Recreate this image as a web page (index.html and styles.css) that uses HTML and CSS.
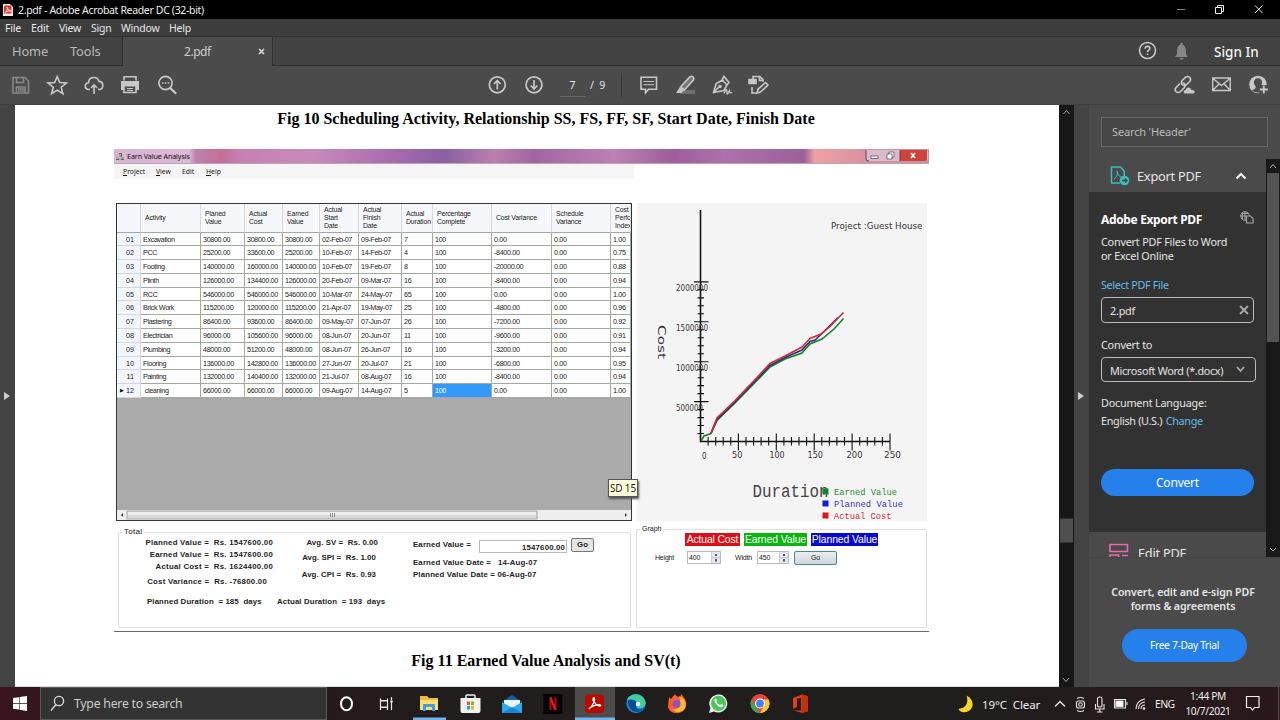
FILE: index.html
```html
<!DOCTYPE html>
<html lang="en">
<head>
<meta charset="utf-8">
<title>2.pdf - Adobe Acrobat Reader DC (32-bit)</title>
<link rel="stylesheet" href="styles.css">
</head>
<body>
<header class="titlebar">
  <svg class="app-icon" width="10" height="12" viewBox="0 0 10 12"><path d="M0 0h7l3 3v9H0z" fill="#f3e9e8"/><path d="M1 1.500h7.500v8H1z" fill="#d93a35"/><path d="M2.500 8.500c2-2 2-4 1.600-5.500 1 3 2 4 4 4-2-.3-4 0-5.600 1.500z" fill="none" stroke="#fff" stroke-width=".8"/></svg>
  <span class="title-text">2.pdf - Adobe Acrobat Reader DC (32-bit)</span>
  <svg class="win-controls" width="110" height="19" viewBox="1170 0 110 19" fill="none" stroke="#eee"><path d="M1177 9.500h8" stroke="#888"/><path d="M1215.500 7.500h6v6h-6zM1217.500 7v-1.500h6v6h-2"/><path d="M1255 5.500l7.500 7.500M1262.500 5.500l-7.500 7.500"/></svg>
</header>
<nav class="menubar"><span class="m1">File</span><span class="m2">Edit</span><span class="m3">View</span><span class="m4">Sign</span><span class="m5">Window</span><span class="m6">Help</span></nav>
<div class="tabs">
  <div class="tab-links"><span class="home">Home</span><span>Tools</span></div>
  <div class="tab-active"><span>2.pdf</span><svg width="7" height="7" viewBox="0 0 7 7" stroke="#ddd" stroke-width="1.500"><path d="M1 1l5 5M6 1l-5 5"/></svg></div>
  <div class="tab-right">
    <svg width="54" height="28" viewBox="1136 37 54 28"><circle cx="1147.500" cy="50.500" r="8" fill="none" stroke="#ccc" stroke-width="1.500"/><path d="M1145.200 48.800c0-3.400 5-3.200 4.600-.2-.2 1.500-2.300 1.500-2.300 3.400M1147.500 53.500v1.600" fill="none" stroke="#ccc" stroke-width="1.500"/><path d="M1175 57c1.800-1.500 2-3 2.200-7 .1-3 1.300-4.700 3.300-5.200V43h2v1.800c2 .5 3.200 2.200 3.300 5.200.2 4 .4 5.500 2.200 7zM1179.500 58h4c-.5 2-3.500 2-4 0z" fill="#888"/></svg>
    <span class="signin">Sign In</span>
  </div>
</div>
<div class="toolbar">
  <svg width="190" height="38" viewBox="0 66 190 38" fill="none" stroke="#c8c8c8" stroke-width="1.600">
    <path d="M13 77.500h12l3.500 3.500v12H13zM16.500 77.500v5h7v-5M16.500 93v-6h8.500v6" stroke="#888"/><path d="M18 88h6v4h-6z" fill="#777" stroke="none"/>
    <path d="M57.200 76.500l2.500 6.100 6.700.4-5.200 4.200 1.700 6.500-5.700-3.600-5.600 3.600 1.700-6.500-5.300-4.200 6.700-.4z"/>
    <path d="M90 89.500h-1.500c-4.500-.5-4.200-6.500 0-6.800.2-6.500 9.200-7 10.400-1.300 5.200 0 5 7.600.6 8.100H98M94 94v-9M91 88l3-3.200 3 3.200"/>
    <path d="M124 80.500v-3.700h12v3.700M124 92.500v-6.700h12v6.700z"/><path d="M121 81h18v9h-3v-4h-12v4h-3z" fill="#c8c8c8" stroke="none"/><path d="M127 88.500h6M127 90.500h6" stroke-width="1"/>
    <circle cx="165.500" cy="83" r="6.600"/><path d="M170.200 88l6 5.800" stroke-width="2.200"/><path d="M162 83h1.500M164.800 83h1.500M167.600 83h1.500"/>
  </svg>
  <svg class="pager-icons" width="60" height="38" viewBox="486 66 60 38" fill="none" stroke="#c8c8c8" stroke-width="1.700"><circle cx="497.300" cy="84.800" r="8"/><path d="M497.300 89.500v-8.800M494 84l3.300-3.500 3.300 3.500"/><circle cx="534" cy="84.800" r="8"/><path d="M534 80v8.800M530.700 85.500l3.300 3.500 3.300-3.500"/></svg>
  <span class="page-no">7</span><span class="page-of">/&nbsp; 9</span>
  <svg class="tools-icons" width="160" height="38" viewBox="612 66 160 38" fill="none" stroke="#c8c8c8" stroke-width="1.600">
    <path d="M621.500 73v24" stroke="#393939" stroke-width="1"/>
    <path d="M641 77.300h15.500v12h-8l-3 3.500v-3.500H641z"/><path d="M643.500 81.500h10.500M643.500 84.700h10.500" stroke-width="1"/>
    <path d="M683 90h12v4h-15z" fill="#707070" stroke="none"/><path d="M680.500 87l9.500-10.300c2-1.300 4.600.8 3.600 3.200l-9.200 10.100z" fill="#777"/><path d="M676 93l4-6 4 3.500-2.500 2.500z" fill="#c8c8c8" stroke="none"/>
    <path d="M713.500 92.500l2.800-9 6.200-3.500 4.500 5-3 5.500zM722 80l2-3.500 5 6-2 2.500M713.500 92.500l6-6"/><circle cx="720" cy="86.500" r="1" /><path d="M724 93.500c2-5 3-5 3-1s2-1 2.500-2c.5 3 1 2.500 2.500 2" stroke-width="1.300"/>
    <path d="M753 79v-2.500h6.800l3.200 3.200v2M752 87v6h4M759.500 76.500v4h3.500"/><path d="M749 79.500h7v4h-7z" fill="#c8c8c8"/><path d="M757 93l1-3.700 7.500-6.800 2.500 2.500-7.500 7z"/>
  </svg>
  <svg class="share-icons" width="110" height="38" viewBox="1170 66 110 38" fill="none" stroke="#c8c8c8" stroke-width="1.600">
    <path d="M1180 83.500l-4 4c-2.500 3.500 1.500 6.500 4.500 4l4-4c1.700-2.200.2-4.600-2-4.700M1183 85c-2.500-1-2-3.500-.5-4.800l3-3c3.500-2 6.500 1.300 4.200 4.300l-3 3c-1 .9-2.500 1.200-3.700.5"/><path d="M1185 93.500c-2-.3-1.500-3.700.8-3.500.8-3.500 5-3 5.600 0 3.500-.4 4.500 3 1.500 3.500z" fill="#c8c8c8" stroke="none"/>
    <path d="M1212.700 78h17.500v12.500h-17.500zM1213 78.500l8.500 7 8.500-7M1213 90l6-6M1230 90l-6-6" stroke-width="1.400"/>
    <circle cx="1258" cy="84.500" r="8.800" fill="#c8c8c8" stroke="none"/><path d="M1258 78.300c5 0 4.800 5.500 2.400 8.200v1.800l3.600 2.200c-3.500 2.600-8.500 2.600-12 0l3.600-2.200v-1.800c-2.400-2.700-2.600-8.200 2.400-8.200z" fill="#4b4b4b" stroke="none"/><path d="M1259.500 85h8v8h-8z" fill="#4b4b4b" stroke="none"/><path d="M1263.800 85.500v8M1259.800 89.500h8" stroke-width="1.800"/>
  </svg>
</div>
<main>
  <div class="left-strip"><i class="tri"></i></div>
  <article class="page">
    <h2 class="cap cap10">Fig 10 Scheduling Activity, Relationship SS, FS, FF, SF, Start Date, Finish Date</h2>
    <section class="shot">
      <div class="shot-title"><svg width="10" height="9" viewBox="0 0 10 9"><path d="M1 5h8v3H1zM4 1h3v4H4z" fill="#666"/><path d="M5 2v6M1 6h8" stroke="#ddd"/></svg><span>Earn Value Analysis</span>
        <svg class="shot-ctl" width="64" height="13" viewBox="0 0 64 13"><path d="M1 0v9q0 2 3 2h56q3 0 3-2V0z" fill="#d9b9cb"/><path d="M35 0h27v9q0 2-2 2H35z" fill="#cf4439"/><path d="M1 0v9q0 2 3 2M35 0v11" fill="none" stroke="#684359"/><path d="M6 6h7v2.500H6zM22 4h5v5h-5zM24 4v-2h5v5h-2" fill="#fff" stroke="#5e5363" stroke-width=".8"/><path d="M46 3l4 5M50 3l-4 5" stroke="#fff" stroke-width="1.500"/></svg>
      </div>
      <div class="shot-menu"><span><u>P</u>roject</span><span><u>V</u>iew</span><span>Edit</span><span><u>H</u>elp</span></div>
      <div class="shot-mid">
        <div class="gridbox">
          <div class="grid" id="grid"></div>
          <div class="hscroll"><svg width="513" height="10" viewBox="0 0 513 10"><rect x="10" y="1" width="410" height="8" fill="#d9d9d9" stroke="#aaa"/><path d="M11 2h408v3H11z" fill="#eee"/><path d="M6 3L4 5l2 2zM508 3l2 2-2 2z" fill="#333"/><path d="M213.500 3v4M215.500 3v4M217.500 3v4" stroke="#777" stroke-width=".8"/></svg></div>
          <div class="tooltip">SD 15</div>
        </div>
        <svg class="chart" id="chart" width="290" height="318" viewBox="637 203 290 318"></svg>
      </div>
      <div class="shot-bottom">
        <fieldset class="total"><legend>Total</legend>
          <div class="totals-cols">
            <div class="c1"><p>Planned Value =&nbsp; Rs. 1547600.00</p><p>Earned Value =&nbsp; Rs. 1547600.00</p><p>Actual Cost =&nbsp; Rs. 1624400.00</p><p class="cv">Cost Variance =&nbsp; Rs. -76800.00</p></div>
            <div class="c2"><p>Avg. SV =&nbsp; Rs. 0.00</p><p>Avg. SPI =&nbsp; Rs. 1.00</p><p>Avg. CPI =&nbsp; Rs. 0.93</p></div>
            <div class="c3"><div class="ev"><span>Earned Value =</span><b class="field">1547600.00</b><b class="go">Go</b></div><p>Earned Value Date =&nbsp;&nbsp; 14-Aug-07</p><p>Planned Value Date = 06-Aug-07</p></div>
          </div>
          <div class="durs"><span>Planned Duration &nbsp;= 185&nbsp; days</span><span>Actual Duration &nbsp;= 193&nbsp; days</span></div>
        </fieldset>
        <fieldset class="graph"><legend>Graph</legend>
          <div class="keys"><span class="k1">Actual Cost</span><span class="k2">Earned Value</span><span class="k3">Planned Value</span></div>
          <div class="dims"><span class="lh">Height</span><b class="spin s1">400<i></i></b><span class="lw">Width</span><b class="spin s2">450<i></i></b><b class="go2">Go</b></div>
        </fieldset>
      </div>
    </section>
    <h2 class="cap cap11">Fig 11 Earned Value Analysis and SV(t)</h2>
  </article>
  <div class="vscroll">
    <svg width="15" height="582" viewBox="0 0 15 582"><path d="M4.500 9L7.500 5.500 10.500 9M4 573l3 3.500 3-3.500" fill="none" stroke="#aaa"/><path d="M1 413.500h13v24H1z" fill="#4f4f4f"/></svg>
  </div>
  <div class="mid-strip"><i class="tri"></i></div>
  <aside>
    <div class="search">Search 'Header'</div>
    <div class="side-row">
      <div class="side-main">
        <div class="exp-head">
          <svg width="20" height="20" viewBox="0 0 20 20" fill="none" stroke="#3bbcc1" stroke-width="1.500"><path d="M10 17H1.500V1h9l3.700 4v6"/><path d="M4 13c4-3 3.500-6 3-8 1 5 3 6 5 6" stroke-width="1"/><circle cx="14.500" cy="14.500" r="4.800" fill="#3bbcc1" stroke="none"/><path d="M12 14.500h5M15 12.500l2 2-2 2" stroke="#464646" stroke-width="1.300"/></svg>
          <span>Export PDF</span>
          <svg width="12" height="8" viewBox="0 0 12 8"><path d="M1.500 6.500L6 2l4.500 4.500" fill="none" stroke="#f2f2f2" stroke-width="2"/></svg>
        </div>
        <div class="exp-body">
          <div class="exp-title"><b>Adobe Export PDF</b><svg width="14" height="13" viewBox="0 0 14 13" fill="none" stroke="#a4a4a4"><circle cx="5" cy="5" r="4.300"/><path d="M.5 5H6M5 .5v9M1.500 2.500h7M2.500 1.500v7"/><path d="M6.500 5h4l2.500 2.500V12H6.500z" fill="#323232" stroke-width="1.200"/></svg></div>
          <p class="desc">Convert PDF Files to Word<br>or Excel Online</p>
          <p class="select-lab">Select PDF File</p>
          <div class="box file"><span>2.pdf</span><svg width="10" height="10" viewBox="0 0 10 10"><path d="M1 1l8 8M9 1L1 9" stroke="#aaa" stroke-width="1.800"/></svg></div>
          <p class="conv-lab">Convert to</p>
          <div class="box fmt"><span>Microsoft Word (*.docx)</span><svg width="9" height="7" viewBox="0 0 9 7"><path d="M1 1l3.500 4L8 1" stroke="#aaa" fill="none" stroke-width="1.800"/></svg></div>
          <p class="lang">Document Language:</p>
          <p class="lang2">English (U.S.) <a>Change</a></p>
          <div class="convert">Convert</div>
        </div>
        <div class="edit-head"><svg width="20" height="18" viewBox="0 0 20 18" fill="none" stroke="#e76cab" stroke-width="1.600"><path d="M1 1.500h17.500v7H1zM1 18v-6h8.500v6M13 12.500h6"/></svg><span>Edit PDF</span></div>
      </div>
      <svg class="side-scroll" width="14" height="398" viewBox="0 0 14 398"><path d="M0 0h14v398H0z" fill="#191919"/><path d="M1 14h12v169H1z" fill="#535353"/><path d="M4 9l3-3.500L10 9M4 389l3 3 3-3" fill="none" stroke="#aaa"/></svg>
    </div>
    <div class="promo"><b>Convert, edit and e-sign PDF<br>forms &amp; agreements</b><div class="trial">Free 7-Day Trial</div></div>
  </aside>
</main>
<footer>
  <div class="start"><svg width="14" height="15" viewBox="0 0 14 15" fill="#fff"><path d="M0 2l6-.8V7H0zM6.600 1.100L14 0v7H6.600zM0 7.700h6v5.900l-6-.9zM6.600 7.700H14V15l-7.400-1.200z"/></svg></div>
  <div class="tsearch"><svg width="15" height="17" viewBox="0 0 15 17" fill="none" stroke="#ddd" stroke-width="1.300"><circle cx="9" cy="6" r="4.600"/><path d="M6 9.500L1 15.500"/></svg><span>Type here to search</span></div>
  <svg class="apps" width="500" height="33" viewBox="327 687 500 33">
    <path d="M575 687h40v33h-40z" fill="#4e4b4b"/><path d="M413 717.500h33v2.500h-33zM575 717.500h40v2.500h-40z" fill="#74b3ea"/>
    <ellipse cx="346.500" cy="703.700" rx="5.500" ry="6.500" fill="none" stroke="#fff" stroke-width="2"/>
    <path d="M380.500 698.500v2h7v-2M380.500 710v-2.500h7v2.500M380.500 701h7v6h-7zM391.500 697v3M391.500 702v8" fill="none" stroke="#e5e5e5" stroke-width="1.200"/><circle cx="391.500" cy="701.500" r="1.200" fill="#fff"/>
    <path d="M420 696h7l2 2h9v12h-18z" fill="#f0b93a"/><path d="M420 700h18v10h-18z" fill="#ffdc77"/><path d="M423 711v-6q0-1 1-1h10q1 0 1 1v6h-3v-4h-6v4z" fill="#3f9edb"/>
    <path d="M466 699v-3q0-1 1-1h7q1 0 1 1v3" fill="none" stroke="#eee" stroke-width="1.500"/><path d="M460.500 698h20v13q0 2-2 2h-16q-2 0-2-2z" fill="#f1f1f1"/><path d="M467 701.500h3v3.500h-3z" fill="#ee5530"/><path d="M471 701.500h3v3.500h-3z" fill="#79b927"/><path d="M467 706h3v3.500h-3z" fill="#1aa5e5"/><path d="M471 706h3v3.500h-3z" fill="#f5b90d"/>
    <path d="M502 702l10-7 10 7z" fill="#155fa9"/><path d="M504 700h16v5l-8 6-8-6z" fill="#eaf5ff"/><path d="M502 702l10 6 10-6v11h-20z" fill="#2baaf0"/><path d="M502 713l10-6 10 6z" fill="#1688d5"/>
    <path d="M543.500 694h19v20h-19z" fill="#050505"/><path d="M550.500 710v-12.500M555.500 710v-12.500" stroke="#ad0d17" stroke-width="2"/><path d="M550.500 697.500l5 12.500" stroke="#ed1723" stroke-width="2.200"/>
    <rect x="585" y="694.500" width="19" height="18.500" rx="3" fill="#b50b02"/><path d="M589 709c2.500-1.500 6.500-8 5.200-11-1-1.500-2 1.500 0 4 2 3.200 6 5 6.500 3.500.2-1.800-9-.5-11.700 3.500z" fill="none" stroke="#fff" stroke-width="1.300"/>
    <circle cx="636" cy="703.500" r="9.700" fill="#1487d4"/><path d="M627 700c2-7 16-8 18.500 2 .5 4-2.500 6-6.500 6-2 0-2.500-1.500-1.500-3 2-4-6-7-10.500-5z" fill="#48cc9a"/><path d="M628 701c4-3 9 0 8 3s1 7 7 5c-4 6-15 3-15-8z" fill="#0b4991"/><circle cx="638" cy="704" r="2.300" fill="#e0f5ff"/>
    <path d="M669 697l2 2c1-2 3-3 4-5 1 3 4 2 5 4l1-4c4 4 6 8 5 12-2 10-18 9-18 0z" fill="#ff5b2c"/><path d="M679 696c5 2 8 7 6 12-2 4-9 6-13 1 8 1 10-4 7-13z" fill="#ffbe31"/><circle cx="676.500" cy="704" r="4" fill="#9052ba"/>
    <path d="M709 713l1.500-5a9 9 0 1 1 3.500 3.400z" fill="#f2f2f2"/><circle cx="718.500" cy="703.300" r="7.600" fill="#4cc65c"/><path d="M714.500 699.500c1-1.500 2-1 2.500 1l-.5 1.500c1 2 2 2.500 3.500 3l1.500-1c3 1 2 2 .5 3-3 1-8-4-7.500-7.500z" fill="#fff"/>
    <circle cx="760" cy="703.500" r="9.500" fill="#e6463d"/><path d="M751.500 699.500l5 8.700 3.500 5a9.500 9.500 0 0 1-8.500-13.700z" fill="#35a855"/><path d="M760 699.500h8.600a9.500 9.500 0 0 1-8.600 13.500l4-7z" fill="#fcc934"/><circle cx="760" cy="703.500" r="5" fill="#fff"/><circle cx="760" cy="703.500" r="3.900" fill="#4484ed"/>
    <path d="M793 698l9-3.500 6 1.700v15L802 713l-9-3 8 .7v-13l-4 1v8.300l-4 2z" fill="#df3d1a"/><path d="M802 694.500l6 1.700v15L802 713z" fill="#c22f12"/>
  </svg>
  <svg class="moon" width="16" height="20" viewBox="0 0 16 20"><path d="M8.500 1.500C19 7 15 20 4 18 2.500 17.500 1 16.500.5 15 8 14 11 9 8.500 1.500z" fill="#ffd324"/></svg>
  <span class="weather">19°C&nbsp; Clear</span>
  <svg class="tray" width="100" height="33" viewBox="1050 687 100 33" fill="none" stroke="#e5e5e5" stroke-width="1.100"><path d="M1055 706.500l5-5 5 5" stroke-width="1.400"/><rect x="1076.500" y="701" width="8" height="7" rx="2"/><circle cx="1080.500" cy="704.500" r="1.800"/><path d="M1077 698.500q3.500-2 7 0M1077 710.500q3.500 2 7 0"/><rect x="1097.500" y="697" width="4.500" height="10" rx="2"/><path d="M1095.500 704v5h8.500v-5M1099.700 709v3M1097 712h5.500"/><path d="M1114.500 699.500h11v8.500h-11z"/><path d="M1116 701h7v5.500h-7z" fill="#fff"/><path d="M1127 702v3"/><path d="M1136 709c0-6 4-9 9-10M1138.500 709c0-4 3-6.500 6.500-7M1141 709c0-2.500 1.500-4 4-4"/><circle cx="1144" cy="708.500" r=".8" fill="#fff"/></svg>
  <span class="eng">ENG</span>
  <div class="clock">1:44 PM<br>10/7/2021</div>
  <svg class="note" width="16" height="17" viewBox="0 0 16 17" fill="none" stroke="#eee" stroke-width="1.200"><path d="M1.500 1.500h12.500v11H9.500l-2 2.500-2-2.500h-4z"/></svg>
  <i class="desk-edge"></i>
</footer>
<script src="app.js"></script>
</body>
</html>
```
FILE: styles.css
```css
*{box-sizing:border-box}
body{margin:0;width:1280px;height:720px;overflow:hidden;display:flex;flex-direction:column;background:#464646;color:#e6e6e6;font-family:"Noto Sans","Open Sans",sans-serif}
p,h2{margin:0}
svg{display:block;flex:none}
span,b,legend{white-space:nowrap}
.titlebar{height:19px;background:#000;display:flex;align-items:center;flex:none}
.app-icon{margin-left:3px}
.title-text{margin-left:5px;font-size:10.500px;letter-spacing:-.34px;color:#eee}
.win-controls{margin-left:auto}
.menubar{height:18px;flex:none;background:#3d3d3d;border-bottom:1px solid #303030;display:flex;font-size:10.500px;line-height:18px;letter-spacing:-.2px}
.m1{width:26px;margin-left:5px}.m2{width:28px}.m3{width:32px}.m4{width:30px}.m5{width:48px}
.tabs{height:29px;flex:none;display:flex;background:#424242;border-bottom:1px solid #2e2e2e}
.tab-links{width:123px;display:flex;padding-left:12px;font-size:12.800px;line-height:28px;color:#bbb;border-right:1px solid #303030;letter-spacing:-.1px}
.home{width:58px}
.tab-active{width:150px;height:29px;background:#4b4b4b;border-right:1px solid #303030;display:flex;align-items:center;font-size:12px;color:#ccc;letter-spacing:-.45px}
.tab-active span{width:74px;margin-left:61px}
.tab-right{margin-left:auto;display:flex;width:144px}
.signin{margin-left:24px;font-size:13.500px;font-weight:500;color:#f2f2f2;line-height:30px;letter-spacing:0}
.toolbar{height:39px;flex:none;background:#4b4b4b;border-bottom:1px solid #404040;display:flex}
.pager-icons{margin-left:296px}
.page-no{width:25px;height:31px;margin-left:14px;border-bottom:1px solid #666;text-align:center;font-size:10.500px;line-height:39px}
.page-of{margin-left:5px;font-size:10.500px;line-height:39px;letter-spacing:0}
.tools-icons{margin-left:7px}
.share-icons{margin-left:auto}
main{height:582px;flex:none;display:flex}
.left-strip{width:15px;background:#444;display:flex;align-items:center;padding-left:4px}
.tri{width:0;height:0;border:4px solid transparent;border-left:6px solid #ccc;border-right:0}
.page{width:1044px;background:#fff;color:#000;border-bottom:1px solid #ddd}
.cap{font-family:"Liberation Serif",serif;font-weight:bold;font-size:16px;text-align:center;white-space:nowrap}
.cap10{line-height:28px;height:44px;padding-left:18px}
.cap11{line-height:20px;margin-top:19px;padding-left:18px}
.shot{margin-left:99px;width:815px;height:483px;font-family:"Liberation Sans",sans-serif;color:#222;border-bottom:1px solid #77616e;display:flex;flex-direction:column}
.shot-title{height:15px;display:flex;align-items:center;font:7.200px "Noto Sans",sans-serif;letter-spacing:-.12px;color:#111;border-bottom:1px solid #b7a7b3;background:linear-gradient(90deg,#d9b4d2 0,#dcb9d7 75px,#bd80ac 82px,#c46f95 108px,#c780b2 126px,#c78abb 200px,#a668ad 285px,#8960a3 330px,#bd7fae 380px,#a265a2 420px,#bd80b4 500px,#9f5d9b 560px,#ae70ac 610px,#9a6299 690px,#efa1a4 701px,#d892a0 751px,#c58dab)}
.shot-title svg:first-child{margin-left:1px}
.shot-title span{margin-left:2px}
.shot-ctl{margin-left:auto}
.shot-menu{width:520px;height:15px;background:#f5f5f5;display:flex;padding-left:9px;font:6.800px/15px "Noto Sans",sans-serif;color:#111}
.shot-menu span:nth-child(1){width:33px}.shot-menu span:nth-child(2){width:26px}.shot-menu span:nth-child(3){width:24px}
.shot-mid{margin-top:24px;padding-left:2px;display:flex;height:318px}
.gridbox{position:relative;width:516px;height:318px;border:1px solid #333;background:#aaa;display:flex;flex-direction:column}
.grid{display:grid;grid-template-columns:24px 60px 44px 38px 37px 39px 43px 31px 59px 60px 59px 20px;grid-template-rows:28.500px repeat(12,13.800px);overflow:hidden;width:514px;font-size:7.200px;letter-spacing:-.35px;color:#222}
.cell{background:#fff;border-right:1px solid #a3a8a3;border-bottom:1px solid #a3a8a3;padding-left:2px;line-height:13px;white-space:nowrap;overflow:hidden}
.cell.head{background:#f6f7fa;display:flex;align-items:center;padding-left:4px;line-height:8px;font-size:6.900px;letter-spacing:-.15px;border-right-color:#d5d8df}
.cell.head:last-of-type{padding-left:3px}
.cell.num{background:#f2f5fa;padding:0 6px 0 0;text-align:right;border-color:#d3d8e0;letter-spacing:0}
.cell.sel{background:#3399fa;color:#fff}
.marker{font-size:5px;padding-right:2px;vertical-align:1px;color:#000}
.hscroll{margin-top:auto;height:10px;background:#eee}
.tooltip{position:absolute;left:491px;top:275px;width:30px;height:18px;background:#ffffdc;border:1px solid #555;box-shadow:1px 2px 2px #555;font:10px/16px "Noto Sans",sans-serif;text-align:center;letter-spacing:-.2px;white-space:nowrap}
.chart{margin-left:5px;background:#f4f4f4}
.shot-bottom{display:flex;padding-top:5px;height:110px}
fieldset{margin:0;padding:0;border:1px solid #dfdfdf;border-radius:2px;min-width:0}
legend{padding:0 2px;margin-left:3px;line-height:10px;font-size:8px;color:#111}
.total{width:513px;height:101px;margin-left:4px;margin-top:1px;font:bold 7.800px/10px "Liberation Sans",sans-serif;color:#222}
.total legend{font-weight:normal;letter-spacing:.3px}
.totals-cols{display:flex;height:56px}
.totals-cols p{white-space:nowrap}
.c1{width:154px;text-align:right;padding-top:1px;letter-spacing:.26px}
.c1 p{height:11.800px}
.c1 .cv{padding-top:4px;padding-right:6px}
.c2{width:105px;text-align:right;padding-top:1px;letter-spacing:.1px}
.c2 p{height:14.500px;padding-right:2px}.c2 p:first-child{padding-right:0}.c2 p:last-child{padding-top:3px}
.c3{margin-left:35px;width:190px;letter-spacing:.17px}
.ev{display:flex;align-items:center;height:15px;margin-bottom:6px}
.ev span{width:66px}
.c3 p{height:12px}
.field{width:88px;height:13px;border:1px solid #bbb;line-height:13px;text-align:right;background:#fff;padding-right:1px;margin-top:4px}
.go{width:23px;height:14px;margin-left:4px;border:1px solid #777;border-radius:2px;background:#e4e4e4;text-align:center;line-height:12px}
.durs{display:flex;padding-left:28px;padding-top:4px;letter-spacing:.14px}
.durs span:first-child{width:130px}
.graph{width:291px;height:103px;margin-left:5px;margin-top:-1px;font-size:7px}
.graph legend{font-size:7px;line-height:8px}
.keys{display:flex;padding-left:48px;height:13px;margin-top:0;gap:4px;font-size:10.400px;line-height:13px;color:#fff;text-align:center}
.k1{width:55px;background:#e00d16;letter-spacing:-.15px}.k2{width:63px;background:#08b60d;letter-spacing:-.1px}.k3{width:67px;background:#0909d5;letter-spacing:-.1px}
.dims{display:flex;align-items:center;padding-left:18px;margin-top:4px;height:15px;letter-spacing:-.2px}
.lh{width:32px}.lw{width:22px;margin-left:14px}
.spin{display:flex;justify-content:space-between;width:34px;height:13px;border:1px solid #bbb;line-height:11px;padding-left:1px;font-weight:normal}
.s2{width:32px}
.spin i{width:9px;border-left:1px solid #ccc;background:radial-gradient(circle at 50% 28%,#557 0 1px,transparent 1.500px),radial-gradient(circle at 50% 76%,#557 0 1px,transparent 1.500px),linear-gradient(#e5e8ee 45%,#bcc 45% 55%,#e5e8ee 55%)}
.go2{width:43px;height:14px;margin-left:5px;border:1px solid #47839c;border-radius:2px;background:linear-gradient(#ececec,#ccd7db);text-align:center;line-height:12px;font-weight:normal}
.vscroll{width:15px;background:#171717}
.mid-strip{width:15px;background:#444;display:flex;align-items:center;padding-left:4px}
aside{width:191px;background:#4a4a4a;display:flex;flex-direction:column}
.search{margin:12px 0 0 12px;width:167px;height:30px;flex:none;border:1px solid #666;background:#464646;color:#bbb;font-size:11px;line-height:28px;padding-left:10px;letter-spacing:-.15px}
.side-row{display:flex;margin-top:12px;height:398px;flex:none}
.side-main{width:177px;overflow:hidden;display:flex;flex-direction:column}
.exp-head{height:33px;flex:none;display:flex;align-items:center;padding-left:21px;font-size:12.800px;letter-spacing:-.25px}
.exp-head span{width:98px;margin-left:7px}
.exp-body{height:340px;flex:none;background:#323232;padding:19px 12px 0;font-size:10.800px;letter-spacing:-.2px}
.exp-title{display:flex;justify-content:space-between;font-size:12px;line-height:17px;letter-spacing:-.35px;color:#fff}
.desc{line-height:14px;margin-top:7px;white-space:nowrap}
.select-lab{line-height:14px;color:#62bde9;margin-top:15px;letter-spacing:-.35px}
.box{border:1px solid #bbb;border-radius:4px;height:26px;display:flex;align-items:center;padding-left:8px;justify-content:space-between}
.file{width:153px;padding-right:4px;margin-top:5px}
.conv-lab{line-height:14px;margin-top:15px}
.fmt{width:155px;height:25px;padding-right:10px;margin-top:5px;letter-spacing:-.3px;line-height:22px}
.fmt span{padding-top:2px}
.lang{line-height:14px;margin-top:14px}
.lang2{line-height:14px;margin-top:4px;letter-spacing:-.3px}
.lang2 a{color:#62bde9;margin-left:1px}
.convert{width:153px;height:27px;border-radius:14px;background:#2680eb;color:#fff;text-align:center;font-size:12px;line-height:27px;margin-top:41px}
.edit-head{height:30px;display:flex;padding:11px 0 0 20px;font-size:12.800px;letter-spacing:-.25px}
.edit-head span{margin-left:9px;line-height:20px}
.promo{border-top:1px solid #444;padding:27px 3px 0 0;text-align:center;font-size:10.600px;line-height:14px;flex:1;letter-spacing:-.08px}
.promo b{font-weight:600}
.trial{width:125px;height:33px;margin:16px auto 0 33px;border-radius:17px;background:#2680eb;color:#fff;line-height:32px;font-size:10.300px;letter-spacing:-.35px}
footer{height:33px;flex:none;display:flex;align-items:center;background:linear-gradient(90deg,#3b141f 0,#32161e 40px,#27191c 320px,#211d1d 420px,#201d1d 1000px,#2a181b 1280px);color:#eee}
.start{width:40px;padding-left:13px}
.tsearch{width:287px;height:33px;background:#333;border:1px solid #595959;display:flex;align-items:center;padding-left:9px;font-size:12.300px;letter-spacing:-.25px;color:#ccc}
.tsearch span{margin-left:9px}
.moon{margin-left:131px}
.weather{margin-left:8px;width:60px;font-size:11.500px;margin-top:2px;letter-spacing:-.1px}
.tray{margin-left:8px}
.eng{margin-left:5px;width:21px;font-size:10.500px;letter-spacing:-.6px}
.clock{width:52px;margin-left:6px;text-align:center;font-size:10.200px;line-height:15px;white-space:nowrap;letter-spacing:-.35px}
.note{margin-left:11px}
.desk-edge{width:1px;height:33px;background:#5b5053;margin-left:17px}
```
FILE: app.js
```js
const heads = ['', 'Activity', 'Planed<br>Value', 'Actual<br>Cost', 'Earned<br>Value', 'Actual<br>Start<br>Date', 'Actual<br>Finish<br>Date', 'Actual<br>Duration', 'Percentage<br>Complete', 'Cost Variance', 'Schedule<br>Variance', 'Cost<br>Perfor<br>Index'];
const rows = `01|Excavation|30800.00|30800.00|30800.00|02-Feb-07|09-Feb-07|7|100|0.00|0.00|1.00
02|PCC|25200.00|33600.00|25200.00|10-Feb-07|14-Feb-07|4|100|-8400.00|0.00|0.75
03|Footing|140000.00|160000.00|140000.00|10-Feb-07|19-Feb-07|8|100|-20000.00|0.00|0.88
04|Plinth|126000.00|134400.00|126000.00|20-Feb-07|09-Mar-07|16|100|-8400.00|0.00|0.94
05|RCC|546000.00|546000.00|546000.00|10-Mar-07|24-May-07|65|100|0.00|0.00|1.00
06|Brick Work|115200.00|120000.00|115200.00|21-Apr-07|19-May-07|25|100|-4800.00|0.00|0.96
07|Plastering|86400.00|93600.00|86400.00|09-May-07|07-Jun-07|26|100|-7200.00|0.00|0.92
08|Electrician|96000.00|105600.00|96000.00|08-Jun-07|20-Jun-07|11|100|-9600.00|0.00|0.91
09|Plumbing|48000.00|51200.00|48000.00|08-Jun-07|26-Jun-07|16|100|-3200.00|0.00|0.94
10|Flooring|136000.00|142800.00|136000.00|27-Jun-07|20-Jul-07|21|100|-6800.00|0.00|0.95
11|Painting|132000.00|140400.00|132000.00|21-Jul-07|08-Aug-07|16|100|-8400.00|0.00|0.94
12|&nbsp;cleaning|66000.00|66000.00|66000.00|09-Aug-07|14-Aug-07|5|100|0.00|0.00|1.00`.split('\n').map(r => r.split('|'));
let html = heads.map(h => `<div class="cell head"><span>${h}</span></div>`).join('');
rows.forEach((r, i) => r.forEach((v, j) => {
  const cls = j === 0 ? ' num' : (i === 11 && j === 8 ? ' sel' : '');
  const text = i === 11 && j === 0 ? '<span class="marker">▶</span>12' : v;
  html += `<div class="cell${cls}">${text}</div>`;
}));
document.getElementById('grid').innerHTML = html;

// Chart axes with minor and major ticks
let d = 'M700.500 210V441M700 441.500H890';
for (let i = 1; i <= 20; i++) {
  const y = (441.500 - i * 7.980).toFixed(1);
  d += i % 5 === 0 ? `M694 ${y}h14.500` : `M697.500 ${y}h6.500`;
}
for (let i = 1; i <= 25; i++) {
  const x = (700.500 + i * 7.580).toFixed(1);
  d += i % 5 === 0 ? `M${x} 433.500v17` : `M${x} 437v8.500`;
}
const t = (x, y, w, s, size, color, font) =>
  `<text x="${x}" y="${y}" textLength="${w}" lengthAdjust="spacingAndGlyphs" font-size="${size}" fill="${color || '#3a3035'}" font-family="${font || 'DejaVu Sans'}">${s}</text>`;
const mono = 'Liberation Mono';
const line = (p, c) => `<polyline points="${p}" fill="none" stroke="${c}" stroke-width="1.600"/>`;
document.getElementById('chart').innerHTML =
  `<path d="${d}" stroke="#111" fill="none" stroke-width="1.100"/><path d="M700.500 210V441.500H890" fill="none" stroke="#111" stroke-width="1.500"/>` +
  line('701,441 704,436 711,433.500 717,420.500 735,403 757,380.500 770,367 785,359 802,353 810,344 822,339 834,329 843.500,318.500', '#118525') +
  line('711,433 717,419.500 735,402 757,379 770,365.500 785,357.500 802,350 810,341.500 815,340 821,334.500 838,317.500', '#2f2b80') +
  line('711,433 717,418 735,400.500 757,377.500 770,363.500 785,356 802,347 810,338.500 821,334 830,326.500 843.500,312.500', '#d12c3c') +
  t(831, 228.500, 91.500, 'Project :Guest House', 9) +
  t(676, 291, 32, '2000000', 8.500) + t(676, 331, 32, '1500000', 8.500) + t(676, 370.500, 32, '1000000', 8.500) + t(676, 410.500, 27, '500000', 8.500) +
  t(702, 458.500, 4.500, '0', 8) + t(732, 458, 10.500, '50', 8) + t(769.500, 458, 15, '100', 8) + t(807.500, 458, 15.500, '150', 8) + t(846.500, 458, 16, '200', 8) + t(884, 458, 17, '250', 8) +
  `<g transform="translate(658 325) rotate(90)">${t(0, 0, 34, 'Cost', 10, '#333')}</g>` +
  t(752.500, 497, 76, 'Duration', 17.500, '#444', mono) +
  '<path d="M822.500 488.500h6v6h-6z" fill="#118525"/><path d="M822.500 500.500h6v6h-6z" fill="#1717dc"/><path d="M822.500 512.500h6v6h-6z" fill="#dc151c"/>' +
  t(834, 495, 63, 'Earned Value', 9.500, '#2b8c35', mono) + t(834, 507, 69, 'Planned Value', 9.500, '#3836b5', mono) + t(834, 519, 57.500, 'Actual Cost', 9.500, '#c92d3a', mono);
```
